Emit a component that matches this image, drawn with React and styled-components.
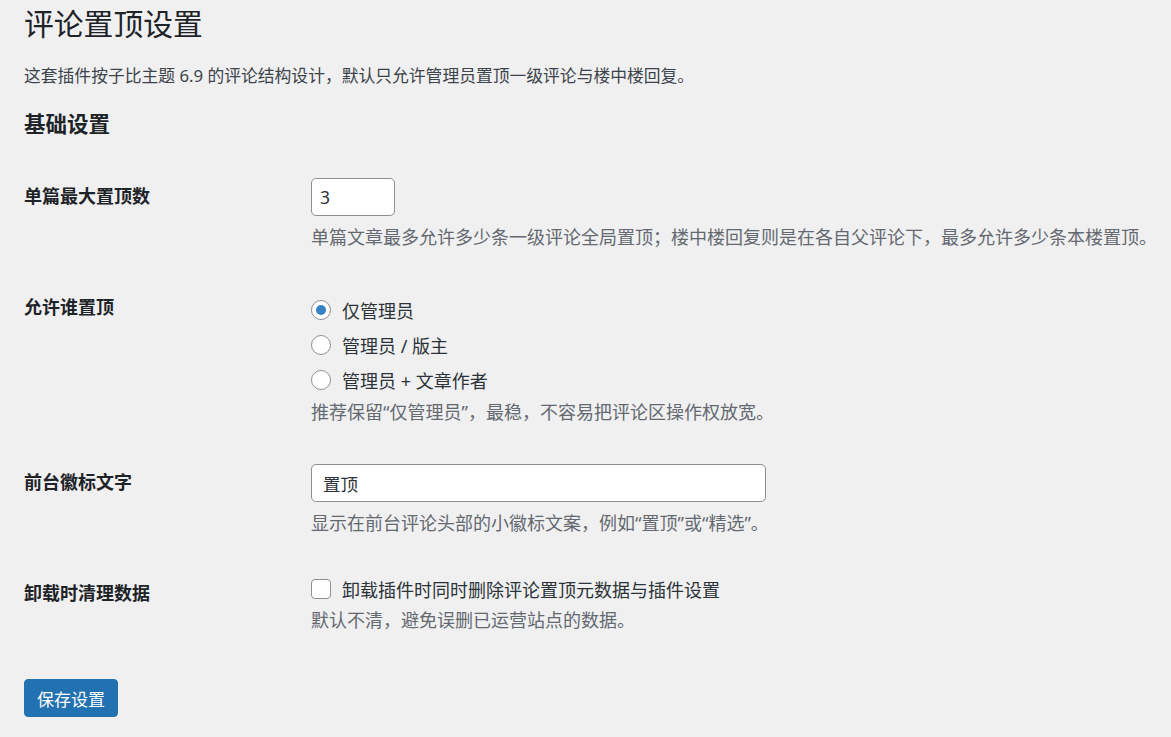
import React, { useState } from 'react'
import styled, { createGlobalStyle } from 'styled-components'

const GlobalStyle = createGlobalStyle`
  html, body {
    margin: 0;
    padding: 0;
    background: #f0f0f1;
  }
  body {
    font-family: "Noto Sans", "Noto Sans CJK SC", sans-serif;
    color: #3c434a;
  }
`

const Wrap = styled.div`
  padding: 5px 0 20px 24px;
`

const Title = styled.h1`
  margin: 0;
  font-size: 29.8px;
  line-height: 37px;
  font-weight: 400;
  color: #1d2327;
`

const Intro = styled.p`
  margin: 22px 0 0;
  font-size: 16.8px;
  line-height: 24px;
  color: #3c434a;
`

const SectionTitle = styled.h2`
  margin: 22px 0 0;
  font-size: 21.5px;
  line-height: 28px;
  font-weight: 700;
  color: #1d2327;
`

const Table = styled.div`
  margin-top: 21px;
`

const Row = styled.div`
  display: grid;
  grid-template-columns: 287px 1fr;
  padding: 19px 0 20px;
`

const Label = styled.div`
  padding-top: 6px;
  font-size: 18px;
  line-height: 24px;
  font-weight: 700;
  color: #1d2327;
`

const Field = styled.div`
  display: flex;
  flex-direction: column;
  align-items: flex-start;
`

const TextInput = styled.input`
  box-sizing: border-box;
  width: ${p => p.$w}px;
  height: 38px;
  padding: 0 ${p => p.$pad || 8}px;
  border: 1px solid #8c8f94;
  border-radius: 5px;
  background: #fff;
  font-family: inherit;
  font-size: 17.5px;
  color: #2c3338;
  outline: none;
`

const Desc = styled.p`
  margin: ${p => p.$mt ?? 8}px 0 0;
  font-size: 18px;
  line-height: 26px;
  color: #646970;
  white-space: nowrap;
`

const RadioList = styled.div`
  margin-top: 3.5px;
  display: flex;
  flex-direction: column;
`

const Choice = styled.label`
  display: flex;
  align-items: center;
  gap: 11px;
  height: ${p => p.$h || 35}px;
  font-size: 18px;
  color: #2c3338;
  cursor: pointer;
`

const RadioDot = styled.span`
  box-sizing: border-box;
  width: 20px;
  height: 20px;
  border-radius: 50%;
  border: 1px solid #8c8f94;
  background: #fff;
  display: flex;
  align-items: center;
  justify-content: center;
  &::after {
    content: '';
    width: 10px;
    height: 10px;
    border-radius: 50%;
    background: ${p => (p.$on ? '#3582c4' : 'transparent')};
  }
`

const CheckBox = styled.span`
  box-sizing: border-box;
  width: 20px;
  height: 20px;
  border-radius: 4px;
  border: 1px solid #8c8f94;
  background: #fff;
`

const Button = styled.button`
  margin-top: 26px;
  height: 38px;
  padding: 0 12px;
  border: 1px solid #2271b1;
  border-radius: 4px;
  background: #2271b1;
  color: #fff;
  font-family: inherit;
  font-size: 17px;
  cursor: pointer;
`

const roles = ['仅管理员', '管理员 / 版主', '管理员 + 文章作者']

export default function App() {
  const [role, setRole] = useState(0)
  const [clean, setClean] = useState(false)

  return (
    <Wrap>
      <GlobalStyle />
      <Title>评论置顶设置</Title>
      <Intro>这套插件按子比主题 6.9 的评论结构设计，默认只允许管理员置顶一级评论与楼中楼回复。</Intro>
      <SectionTitle>基础设置</SectionTitle>

      <Table>
        <Row>
          <Label>单篇最大置顶数</Label>
          <Field>
            <TextInput $w={84} defaultValue="3" />
            <Desc>单篇文章最多允许多少条一级评论全局置顶；楼中楼回复则是在各自父评论下，最多允许多少条本楼置顶。</Desc>
          </Field>
        </Row>

        <Row>
          <Label>允许谁置顶</Label>
          <Field>
            <RadioList>
              {roles.map((r, i) => (
                <Choice key={r} onClick={() => setRole(i)}>
                  <RadioDot $on={role === i} />
                  {r}
                </Choice>
              ))}
            </RadioList>
            <Desc $mt={1.5}>推荐保留“仅管理员”，最稳，不容易把评论区操作权放宽。</Desc>
          </Field>
        </Row>

        <Row>
          <Label>前台徽标文字</Label>
          <Field>
            <TextInput $w={455} $pad={11} defaultValue="置顶" />
            <Desc>显示在前台评论头部的小徽标文案，例如“置顶”或“精选”。</Desc>
          </Field>
        </Row>

        <Row>
          <Label>卸载时清理数据</Label>
          <Field>
            <Choice $h={28} onClick={() => setClean(!clean)}>
              <CheckBox />
              卸载插件时同时删除评论置顶元数据与插件设置
            </Choice>
            <Desc $mt={4}>默认不清，避免误删已运营站点的数据。</Desc>
          </Field>
        </Row>
      </Table>

      <Button>保存设置</Button>
    </Wrap>
  )
}
